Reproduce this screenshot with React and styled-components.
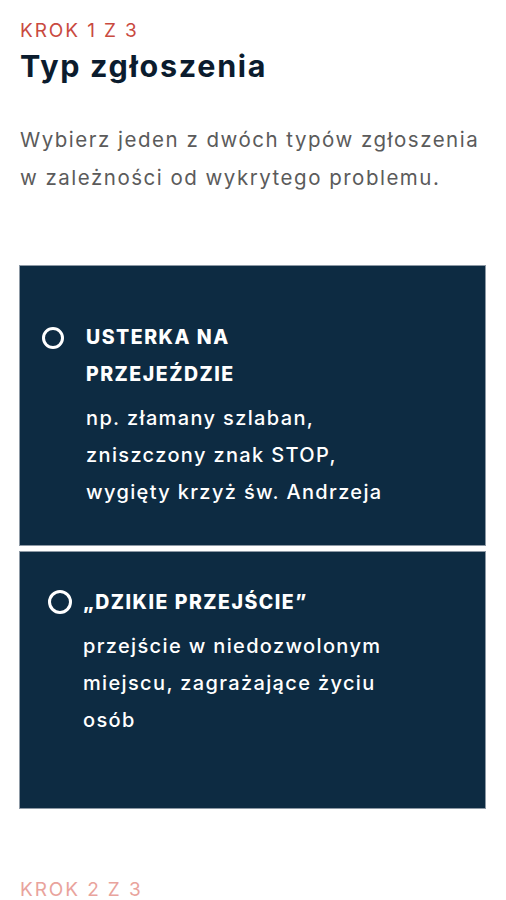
import React from "react";
import styled, { createGlobalStyle } from "styled-components";

const GlobalStyle = createGlobalStyle`
  html, body { margin: 0; padding: 0; background: #ffffff; }
  body { font-family: Inter, "Liberation Sans", sans-serif; -webkit-font-smoothing: antialiased; }
  * { box-sizing: border-box; }
`;

const Page = styled.main`
  width: 506px;
  padding: 19px 20px 0 20px;
  display: flex;
  flex-direction: column;
`;

const StepLabel = styled.div`
  font-size: 19px;
  line-height: 24px;
  letter-spacing: 1.9px;
  color: ${(p) => (p.$faded ? "#e9a39c" : "#c94a3f")};
  margin-top: ${(p) => p.$top || 0}px;
`;

const Heading = styled.h1`
  margin: 4px 0 0 0;
  font-size: 30.5px;
  line-height: 38px;
  font-weight: 700;
  letter-spacing: 1.7px;
  color: #0b1c2e;
`;

const Intro = styled.p`
  margin: 36px 0 0 0;
  font-size: 20.5px;
  line-height: 38px;
  color: #5b5b5b;
  letter-spacing: 1.5px;
`;

const Options = styled.div`
  margin: 68px 0 0 -1px;
  width: 467px;
  display: flex;
  flex-direction: column;
  gap: 5px;
`;

const Option = styled.label`
  display: flex;
  align-items: flex-start;
  gap: ${(p) => p.$gap}px;
  background: #0d2b42;
  border: 1px solid #8d99a5;
  padding: ${(p) => p.$pad};
  cursor: pointer;
`;

const Radio = styled.span`
  flex: none;
  width: ${(p) => p.$size}px;
  height: ${(p) => p.$size}px;
  margin-top: ${(p) => p.$offset}px;
  border: 3px solid #ffffff;
  border-radius: 50%;
`;

const Body = styled.div`
  display: flex;
  flex-direction: column;
  color: #ffffff;
`;

const Title = styled.div`
  font-size: 19.5px;
  line-height: 37px;
  font-weight: 800;
  text-transform: uppercase;
  letter-spacing: 1.5px;
`;

const Desc = styled.div`
  margin-top: 6.5px;
  font-size: 20px;
  line-height: 37px;
  font-weight: 500;
  letter-spacing: 1.35px;
`;

export default function App() {
  return (
    <>
      <GlobalStyle />
      <Page>
        <StepLabel>KROK 1 Z 3</StepLabel>
        <Heading>Typ zgłoszenia</Heading>
        <Intro>
          Wybierz jeden z dwóch typów zgłoszenia
          <br />
          w zależności od wykrytego problemu.
        </Intro>
        <Options>
          <Option $pad="53px 20px 34px 22px" $gap={22}>
            <Radio $size={22} $offset={7.5} />
            <Body>
              <Title>
                Usterka na
                <br />
                przejeździe
              </Title>
              <Desc>
                np. złamany szlaban,
                <br />
                zniszczony znak STOP,
                <br />
                wygięty krzyż św. Andrzeja
              </Desc>
            </Body>
          </Option>
          <Option $pad="32.5px 20px 69px 28px" $gap={11}>
            <Radio $size={24} $offset={5.5} />
            <Body>
              <Title>„Dzikie przejście”</Title>
              <Desc>
                przejście w niedozwolonym
                <br />
                miejscu, zagrażające życiu
                <br />
                osób
              </Desc>
            </Body>
          </Option>
        </Options>
        <StepLabel $faded $top={69}>KROK 2 Z 3</StepLabel>
      </Page>
    </>
  );
}
